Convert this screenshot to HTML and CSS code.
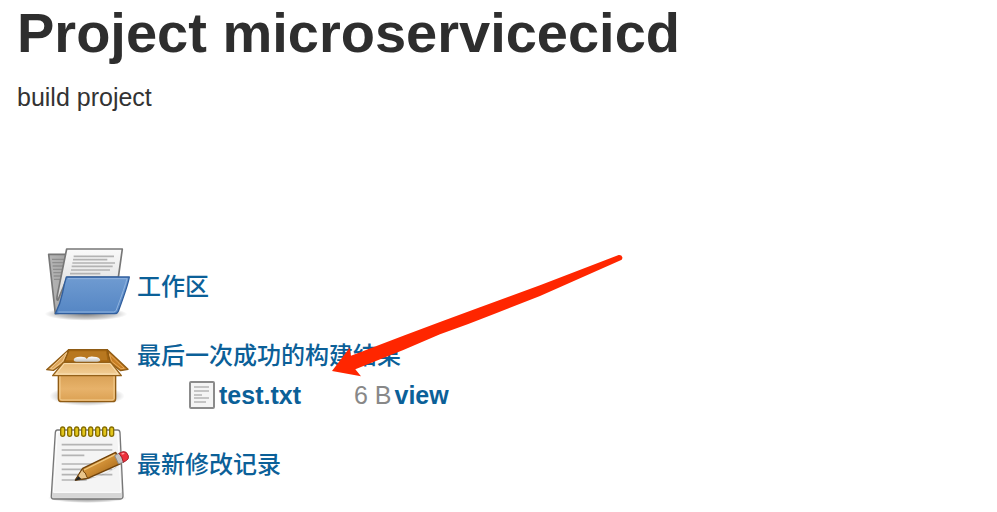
FILE: index.html
```html
<!DOCTYPE html>
<html lang="zh-CN">
<head>
<meta charset="utf-8">
<title>Project microservicecicd</title>
<link rel="stylesheet" href="styles.css">
</head>
<body>
<main class="project">
  <h1 class="title">Project microservicecicd</h1>
  <p class="description">build project</p>
  <ul class="links">
    <li class="item">
      <svg class="icon" viewBox="0 6 276 267" aria-hidden="true">
        <defs>
          <linearGradient id="blue" x1="0" y1="0" x2="0" y2="1"><stop offset="0" stop-color="#6f9bd1"/><stop offset="1" stop-color="#5586c4"/></linearGradient>
          <linearGradient id="grey" x1="0" y1="0" x2="1" y2="0"><stop offset="0" stop-color="#b5b5b5"/><stop offset="1" stop-color="#7d7d7d"/></linearGradient>
          <linearGradient id="sheet" x1="0" y1="0" x2="0" y2="1"><stop offset="0" stop-color="#fafafa"/><stop offset="1" stop-color="#d8d8d8"/></linearGradient>
          <radialGradient id="shade"><stop offset="0" stop-color="#000" stop-opacity=".5"/><stop offset=".7" stop-color="#000" stop-opacity=".2"/><stop offset="1" stop-color="#000" stop-opacity="0"/></radialGradient>
        </defs>
        <ellipse cx="138" cy="222" rx="124" ry="20" fill="url(#shade)"/>
        <path d="M26 43H88L96 54 224 92 232 120 90 216 46 221Z" fill="url(#grey)" stroke="#777" stroke-width="5" stroke-linejoin="round"/>
        <path d="M36 58h38M37 68h35M38 78h33M39 88h31M40 98h29M41 108h27M42 118h25" stroke="#8e8e8e" stroke-width="4"/>
        <path d="M80 27H247L235 112H82L54 180Q48 183 53 160Z" fill="url(#sheet)" stroke="#777" stroke-width="5" stroke-linejoin="round"/>
        <path d="M101 49h121M99 59h103M97 69h128M95 79h123M93 90h117M90 101h91" stroke="#b3b3b3" stroke-width="5"/>
        <path d="M79 111H268Q264 135 235 214 232 221 225 221H46Q61 192 68 157 73 130 79 111Z" fill="url(#blue)" stroke="#315f9e" stroke-width="4" stroke-linejoin="round"/>
        <path d="M84 116H261Q255 140 229 210 227 216 221 216H55" fill="none" stroke="#91b4df" stroke-width="3"/>
      </svg>
      <a class="link" href="#workspace">工作区</a>
    </li>
    <li class="item">
      <svg class="icon" viewBox="0 -12 276 267" aria-hidden="true">
        <defs>
          <linearGradient id="card" x1="0" y1="0" x2="0" y2="1"><stop offset="0" stop-color="#d49b4f"/><stop offset=".6" stop-color="#e7b26a"/><stop offset="1" stop-color="#dba052"/></linearGradient>
          <linearGradient id="flap" x1="0" y1="0" x2="0" y2="1"><stop offset="0" stop-color="#e6b671"/><stop offset="1" stop-color="#f2cf98"/></linearGradient>
          <linearGradient id="fill" x1="0" y1="0" x2="0" y2="1"><stop offset="0" stop-color="#fff"/><stop offset="1" stop-color="#b7b5ad"/></linearGradient>
        </defs>
        <ellipse cx="141" cy="183" rx="113" ry="30" fill="url(#shade)"/>
        <path d="M55 105H227V191Q227 200 218 200H65Q55 200 55 191Z" fill="url(#card)" stroke="#8f5b14" stroke-width="4"/>
        <path d="M60 120V190Q60 195 66 195H216Q222 195 222 190V120" fill="none" stroke="#f3ce91" stroke-width="3"/>
        <path d="M86 44H202L212 84H70Z" fill="#a4650f" stroke="#8f5b14" stroke-width="4"/>
        <path d="M88 49H198L202 76H76Z" fill="#b87820"/>
        <path d="M101 76Q101 65 120 65 137 64 140 72 145 63 161 65 180 66 181 76 177 84 141 84 102 84 101 76Z" fill="url(#fill)"/>
        <path d="M86 44 20 104 41 106 72 83Z" fill="#dda65c" stroke="#8f5b14" stroke-width="4" stroke-linejoin="round"/>
        <path d="M80 53 31 101 39 102 68 79Z" fill="none" stroke="#f2cb91" stroke-width="3"/>
        <path d="M202 44 264 103 242 107 211 83Z" fill="#c87e23" stroke="#8f5b14" stroke-width="4" stroke-linejoin="round"/>
        <path d="M208 57 253 100 243 101 215 79Z" fill="none" stroke="#e5a95a" stroke-width="3"/>
        <path d="M70 82H213L244 122H38Z" fill="url(#flap)" stroke="#94611a" stroke-width="4" stroke-linejoin="round"/>
        <path d="M73 86H210L234 117H48Z" fill="none" stroke="#fae0b4" stroke-width="3"/>
      </svg>
      <div class="build">
        <a class="link" href="#last-build">最后一次成功的构建结果</a>
        <table class="files">
          <tbody>
            <tr>
              <td class="type">
                <svg class="file" viewBox="0 0 26 28" aria-hidden="true">
                  <rect x="1" y="1" width="24" height="26" rx="1" fill="#f4f4f4" stroke="#8b8b8b" stroke-width="2"/>
                  <path d="M5 6h15M5 10h15M5 14h8M5 17h15M5 21h12" stroke="#c4c4c4" stroke-width="2"/>
                </svg>
              </td>
              <td class="name"><a class="link" href="#test.txt">test.txt</a></td>
              <td class="size">6 B</td>
              <td><a class="link" href="#view">view</a></td>
            </tr>
          </tbody>
        </table>
      </div>
    </li>
    <li class="item">
      <svg class="icon" viewBox="0 15 276 267" aria-hidden="true">
        <defs>
          <linearGradient id="pencil" x1="0" y1="0" x2="1" y2="1"><stop offset="0" stop-color="#e7b15a"/><stop offset=".5" stop-color="#cf8e35"/><stop offset="1" stop-color="#8f530b"/></linearGradient>
        </defs>
        <ellipse cx="142" cy="249" rx="118" ry="15" fill="url(#shade)"/>
        <path d="M52 45H233Q239 45 240 53L249 240Q250 252 241 252H42Q32 252 34 241L46 52Q47 45 52 45Z" fill="url(#sheet)" stroke="#777" stroke-width="4"/>
        <path d="M52 51H233L243 232H40Z" fill="#f4f4f4" stroke="#fff" stroke-width="3"/>
        <path d="M39 235H244V246H39Z" fill="#d6d6d6"/>
        <path d="M65 89H217M65 105H217M65 121H133M65 147H217M65 163H217M65 179H217M65 195H140" stroke="#b4b4b4" stroke-width="5"/>
        <g fill="#e2c51b" stroke="#856d00" stroke-width="4">
          <rect x="62" y="36" width="12" height="28" rx="6"/><rect x="83" y="36" width="12" height="28" rx="6"/><rect x="104" y="36" width="12" height="28" rx="6"/><rect x="125" y="36" width="12" height="28" rx="6"/><rect x="146" y="36" width="12" height="28" rx="6"/><rect x="167" y="36" width="12" height="28" rx="6"/><rect x="188" y="36" width="12" height="28" rx="6"/><rect x="209" y="36" width="12" height="28" rx="6"/>
        </g>
        <path d="M110 198Q165 196 226 160L236 150Q190 190 140 188Z" fill="#000" opacity=".25"/>
        <path d="M106 195 128 160 227 112 242 146 143 190Z" fill="url(#pencil)" stroke="#70420b" stroke-width="4" stroke-linejoin="round"/>
        <path d="M132 165 225 119" stroke="#f0c67c" stroke-width="4"/>
        <path d="M106 195 128 160Q128 172 136 174 139 183 143 190Z" fill="#e9c58b" stroke="#70420b" stroke-width="3"/>
        <path d="M104 197 115 183 124 192Z" fill="#222"/>
        <path d="M224 122 238 114 252 141 236 147Z" fill="#c5c5c5" stroke="#8c8c8c" stroke-width="3"/>
        <path d="M237 115 249 110Q260 108 265 122 267 132 260 136L250 142Q248 126 237 115Z" fill="#ee2f3b" stroke="#a4222a" stroke-width="3"/>
        <path d="M245 117 253 115" stroke="#ff9b9f" stroke-width="4"/>
      </svg>
      <a class="link" href="#changes">最新修改记录</a>
    </li>
  </ul>
  <svg class="arrow" viewBox="0 0 960 420" aria-hidden="true">
    <path d="M36 378 89 308 93 332 250 272 360 231Q510 176 660 121L896 30Q905 29 907 37 908 43 902 46L660 153 530 204Q450 236 360 268L250 315 106 373 123 394Z" fill="#ff2600"/>
  </svg>
</main>
</body>
</html>
```
FILE: styles.css
```css
body {
  margin: 0;
  background: #fff;
  color: #333;
  font-family: "Liberation Sans", "Noto Sans CJK SC", sans-serif;
  font-size: 25px;
}

.project {
  position: relative;
  padding: 1px 17px 0;
}

.title {
  margin: 0;
  color: #2e2e2e;
  font-size: 56px;
  line-height: 64px;
}

.description {
  margin: 16px 0 0;
  line-height: 32px;
}

.links {
  margin: 129px 0 0;
  padding: 0 0 0 23px;
  list-style: none;
}

.item {
  display: flex;
  align-items: center;
  gap: 5px;
}

.icon {
  flex: none;
  width: 92px;
  height: 89px;
}

.link {
  color: #0b6098;
  font-size: 24px;
  font-weight: 500;
  line-height: 40px;
  text-decoration: none;
}

.build {
  padding-bottom: 2px;
}

.build > .link {
  display: block;
}

.files {
  margin-left: 52px;
  border-collapse: collapse;
}

.files td {
  padding: 0;
  line-height: 38px;
}

.files .link {
  font-size: 25px;
  font-weight: 700;
  line-height: 38px;
}

.files .type {
  width: 30px;
}

.files .name {
  padding-right: 53px;
}

.files .size {
  padding-right: 3px;
  color: #888;
}

.file {
  display: block;
  width: 26px;
  height: 28px;
}

.arrow {
  position: absolute;
  top: 245px;
  left: 320px;
  width: 320px;
  height: 140px;
  pointer-events: none;
}
```
